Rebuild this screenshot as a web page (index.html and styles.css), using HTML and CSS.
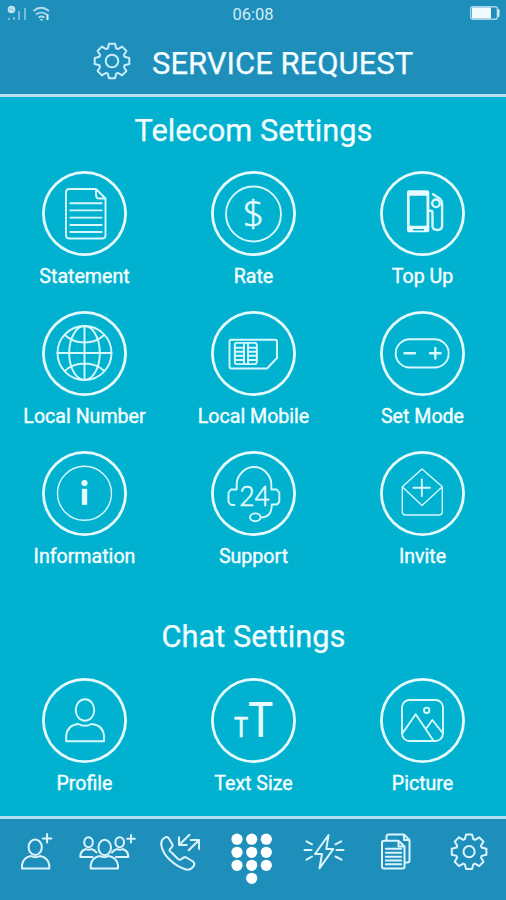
FILE: index.html
```html
<!DOCTYPE html>
<html lang="en">

<head>
    <meta charset="UTF-8">
    <title>Service Request</title>
    <meta name="viewport" content="width=device-width, initial-scale=1.0">
    <link rel="stylesheet" href="styles.css">
</head>

<body>
    <header>
        <div class="status-bar">
            <div class="status-left">
                <svg class="signal" width="22" height="18" viewBox="0 0 22 18">
                    <circle cx="6.500" cy="4.500" r="3.800" fill="#bfe0f0"/>
                    <path d="M4.500 3.500l4 2" stroke="#7fb9d5"/>
                    <path d="M4 13v2M9 12v3M14 6v9M20 3v12" stroke="#79bcd8" stroke-width="2"/>
                </svg>
                <svg width="20" height="18" viewBox="0 0 20 18">
                    <path d="M1.500 6q7.500-6.500 15.500 0M4 9.500q5-4 10.500 0M6.500 12.700q3-2.400 6 0" fill="none" stroke="#b5dcec" stroke-width="1.700"/>
                    <path d="M9.500 15.500v-1.500M15.500 9v6" stroke="#d9eef7" stroke-width="2"/>
                </svg>
            </div>
            <div class="time">06:08</div>
            <svg class="battery" width="30" height="14" viewBox="0 0 30 14">
                <rect x=".7" y=".7" width="26.600" height="12.600" rx="2" fill="none" stroke="#a9d3e6" stroke-width="1.400"/>
                <rect x="2" y="1.500" width="19" height="11" fill="#f0fbff"/>
                <path d="M28.500 4v6" stroke="#d3ebf5" stroke-width="2"/>
            </svg>
        </div>
        <div class="title-row">
            <svg width="40" height="40" viewBox="-20 -20 40 40" class="line-icon">
                <path d="M-4.200-12.600L-3-17.300H3L4.200-12.600L5.900-11.900L10.100-14.400L14.400-10.100L11.900-5.900L12.600-4.200L17.300-3V3L12.600 4.200L11.900 5.900L14.400 10.100L10.100 14.400L5.900 11.900L4.200 12.600L3 17.300H-3L-4.200 12.600L-5.900 11.900L-10.100 14.400L-14.400 10.100L-11.900 5.900L-12.600 4.200L-17.300 3V-3L-12.600-4.200L-11.900-5.900L-14.400-10.100L-10.100-14.400L-5.900-11.900Z"/>
                <circle r="6.300"/>
            </svg>
            <h1>SERVICE REQUEST</h1>
        </div>
    </header>

    <main>
        <h2>Telecom Settings</h2>
        <div class="grid">
            <div class="item">
                <svg class="icon" viewBox="0 0 85 85">
                    <path d="M54 18H27.500q-3.500 0-3.500 3.500V64q0 3.500 3.500 3.500H60q3.500 0 3.500-3.500V27.500ZM54 18v6q0 3.500 3.500 3.500h6"/>
                    <path d="M28.300 32.300h31.400M28.300 39.400h31.400M28.300 46.600h31.400M28.300 54h31.400M28.300 61h31.400"/>
                </svg>
                <span>Statement</span>
            </div>
            <div class="item">
                <svg class="icon" viewBox="0 0 85 85">
                    <circle cx="42.500" cy="43" r="27.500"/>
                    <text class="dollar" x="42.500" y="55.500">$</text>
                </svg>
                <span>Rate</span>
            </div>
            <div class="item">
                <svg class="icon" viewBox="0 0 85 85">
                    <path class="solid" fill-rule="evenodd" d="M29 19.300h18.300q2 0 2 2v38q0 2-2 2H29q-2 0-2-2v-38q0-2 2-2ZM29.700 24.700v30h16.800v-30ZM33 58h11v1.500H33Z"/>
                    <path class="thick" d="M49 39.700h1.500q2 0 2 2V54.500q0 4.500 4.800 4.500t4.800-4.500V32q0-2.500-2-4.200L53 23.300"/>
                    <circle class="thick" cx="56" cy="32.300" r="3.800"/>
                </svg>
                <span>Top Up</span>
            </div>
            <div class="item">
                <svg class="icon" viewBox="0 0 85 85">
                    <circle cx="42.500" cy="42" r="27"/>
                    <ellipse cx="42.500" cy="42" rx="15.300" ry="27"/>
                    <path d="M42.500 15v54M15.500 42h54M22.800 24q8 7.500 19.700 7.500T62.200 24M22.800 60q8-7.500 19.700-7.500T62.200 60"/>
                </svg>
                <span>Local Number</span>
            </div>
            <div class="item">
                <svg class="icon" viewBox="0 0 85 85">
                    <path d="M20.500 28.800h43.500q2 0 2 2V47L56 57.500H20.500q-2 0-2-2V30.800q0-2 2-2Z"/>
                    <rect x="23.800" y="31.900" width="22" height="21.200" rx="2"/>
                    <path d="M33 32v21M37 32v21M24 36.700h9M24 40.700h9M24 44.700h9M24 49h9M37 36.700h9M37 40.700h9M37 44.700h9M37 49h9"/>
                </svg>
                <span>Local Mobile</span>
            </div>
            <div class="item">
                <svg class="icon" viewBox="0 0 85 85">
                    <rect x="15.700" y="28.300" width="53" height="28.200" rx="14.100"/>
                    <path class="thick" d="M24.500 42.300h10.500M50 42.300h10.500M55.300 37v10.600"/>
                </svg>
                <span>Set Mode</span>
            </div>
            <div class="item">
                <svg class="icon" viewBox="0 0 85 85">
                    <circle class="thin" cx="42.500" cy="42.300" r="27"/>
                    <circle class="solid" cx="42.500" cy="32" r="3.100"/>
                    <rect class="solid" x="39.900" y="37.700" width="5.300" height="16.300" rx="1"/>
                </svg>
                <span>Information</span>
            </div>
            <div class="item">
                <svg class="icon" viewBox="0 0 85 85">
                    <path d="M23.500 54H20l-2.500-3V41.500L20 38.500h5.700V33q0-6 5-11.500 5-5.500 12.300-5.500t12.300 5.500q5 5.500 5 11.500v5.500h5.500l2.500 3V51l-2.500 2.500h-5q0 13-10.700 13"/>
                    <ellipse cx="44.300" cy="66.300" rx="5.300" ry="3.900"/>
                    <text class="hours" x="43.500" y="54.500">24</text>
                </svg>
                <span>Support</span>
            </div>
            <div class="item">
                <svg class="icon" viewBox="0 0 85 85">
                    <path class="thin" d="M42 18L22.300 35.700V60.500q0 3.500 3.500 3.500h33q3.500 0 3.500-3.500V35.700ZM22.300 35.700L42 54.500L62.300 35.700"/>
                    <path d="M33.500 36.700h16.500M41.800 28.500v16.500"/>
                </svg>
                <span>Invite</span>
            </div>
        </div>

        <h2 class="chat-title">Chat Settings</h2>
        <div class="grid">
            <div class="item">
                <svg class="icon" viewBox="0 0 85 85">
                    <ellipse cx="43" cy="32" rx="9.300" ry="10.700"/>
                    <path d="M24.200 63.300V58q1-11 12.300-12 6.500 3.500 13 0 11.500 1 12.500 12v5.300Z"/>
                </svg>
                <span>Profile</span>
            </div>
            <div class="item">
                <svg class="icon" viewBox="0 0 85 85">
                    <text class="small-t" x="23.300" y="59" textLength="13.700" lengthAdjust="spacingAndGlyphs">T</text>
                    <text class="big-t" x="37.500" y="59" textLength="24.300" lengthAdjust="spacingAndGlyphs">T</text>
                </svg>
                <span>Text Size</span>
            </div>
            <div class="item">
                <svg class="icon" viewBox="0 0 85 85">
                    <rect x="22" y="22" width="41" height="41" rx="7.500"/>
                    <circle cx="46.700" cy="32.300" r="2.700"/>
                    <path d="M22.500 55.300L35.700 36.300L53.700 63M46 50.700L52.300 42L62.700 55"/>
                </svg>
                <span>Picture</span>
            </div>
        </div>
    </main>

    <nav>
        <svg viewBox="0 0 60 54">
            <ellipse cx="29.200" cy="15.200" rx="6.600" ry="7.700"/>
            <path d="M16 36.500V33q1-7.500 9-9 4.500 2.500 9 0 8 1.500 9.300 9v3.500ZM36.800 6.400h8.600M41.100 2v8.600"/>
        </svg>
        <svg viewBox="0 0 60 54">
            <ellipse cx="26.700" cy="15.500" rx="6.300" ry="7.700"/>
            <path d="M12.700 36.500V33q1-7.500 9-9 4.500 2.500 9 0 8 1.500 9.300 9v3.500Z"/>
            <ellipse cx="10.500" cy="10.300" rx="4.300" ry="5"/>
            <ellipse cx="41.700" cy="10.300" rx="4.300" ry="5"/>
            <path d="M14.500 25H2.300q0-6.500 5.700-8 2.500 1.500 5 0 3.500.5 5.500 3.500M38 25h12.300q0-6.500-5.800-8-2.500 1.500-5 0-3.500.5-5.500 3.500M49.200 6.700h7.600M53 2.900v7.600"/>
        </svg>
        <svg viewBox="0 0 60 54">
            <path d="M12.500 7.500Q16 3.500 18.500 6L22.500 12.500Q23 14.500 20.500 16.500T21.500 20.500L28 27Q30 28.500 31.500 27T35.500 25L43 29.500Q46 32 42.500 35.500T34.500 37Q27 34.500 20 28T11.500 14Q10.500 10 12.500 7.500Z"/>
            <path d="M39.500 2.700L29 13M29 5.300V13h7.700M38.700 18.300L49 8M40.700 8H49v9"/>
        </svg>
        <svg viewBox="0 0 60 54">
            <g class="dots">
                <circle cx="15" cy="7.200" r="5.600"/><circle cx="29.700" cy="7.200" r="5.600"/><circle cx="44.300" cy="7.200" r="5.600"/>
                <circle cx="15" cy="20.300" r="5.600"/><circle cx="29.700" cy="20.300" r="5.600"/><circle cx="44.300" cy="20.300" r="5.600"/>
                <circle cx="15" cy="33.300" r="5.600"/><circle cx="29.700" cy="33.300" r="5.600"/><circle cx="44.300" cy="33.300" r="5.600"/>
                <circle cx="29.700" cy="46.300" r="5.600"/>
            </g>
        </svg>
        <svg viewBox="0 0 60 54">
            <path d="M34.500 3L21 22h7L25.500 36.300L39.300 17h-7ZM10.500 18h7M12.500 9.300l5.500 3M12.500 27.700l5.500-3.200M42.500 18h7M41.500 12.300L47.200 9.300M41.500 24.500L47.500 27.700"/>
        </svg>
        <svg viewBox="0 0 60 54">
            <path d="M32.500 8.700H18q-2 0-2 2V34.500q0 2 2 2h18.500q2 0 2-2V14.500ZM32.500 8.700v5.800h6"/>
            <path d="M20.500 8.500V4.500q0-2 2-2H38l5.500 5.500v20q0 2.500-2 2.500h-2.500M38 2.500V8h5.500"/>
            <path d="M19.800 16.700h15.400M19.800 20.700h15.400M19.800 24.700h15.400M19.800 28.500h15.400M19.800 32.300h15.400"/>
        </svg>
        <svg viewBox="0 0 60 54">
            <g transform="translate(31.100 19.700)">
                <path d="M-4.200-12.600L-3-17.300H3L4.200-12.600L5.900-11.900L10.100-14.400L14.400-10.100L11.900-5.900L12.600-4.200L17.300-3V3L12.600 4.200L11.900 5.900L14.400 10.100L10.100 14.400L5.900 11.900L4.200 12.600L3 17.300H-3L-4.200 12.600L-5.900 11.900L-10.100 14.400L-14.400 10.100L-11.900 5.900L-12.600 4.200L-17.300 3V-3L-12.600-4.200L-11.900-5.900L-14.400-10.100L-10.100-14.400L-5.900-11.900Z"/>
                <circle r="5.600"/>
            </g>
        </svg>
    </nav>
</body>

</html>
```
FILE: styles.css
```css
* {
    box-sizing: border-box;
}

body {
    margin: 0;
    width: 506px;
    height: 900px;
    overflow: hidden;
    display: flex;
    flex-direction: column;
    background-color: #00b2d0;
    color: #f4fdff;
    font-family: Roboto, "Liberation Sans", sans-serif;
}

svg {
    display: block;
    fill: none;
    stroke-linecap: round;
    stroke-linejoin: round;
}

header {
    height: 97px;
    background-color: #1e8fba;
    border-bottom: 3px solid #b5dff0;
}

.status-bar {
    height: 28px;
    padding: 0 6px 0 5px;
    display: grid;
    grid-template-columns: 1fr auto 1fr;
    align-items: center;
}

.status-left {
    display: flex;
    gap: 5px;
}

.status-left svg {
    stroke-linecap: butt;
}

.time {
    padding-left: 1px;
    font-size: 16.5px;
    color: #d5edf6;
}

.battery {
    justify-self: end;
    margin-top: -2px;
}

.title-row {
    display: flex;
    align-items: center;
    height: 66px;
    padding-left: 92px;
    gap: 20px;
}

.line-icon {
    stroke: #c8ecfa;
    stroke-width: 2;
}

h1,
h2 {
    margin: 0;
    font-weight: 400;
    white-space: nowrap;
    -webkit-text-stroke: 0.25px #f4fdff;
}

h1 {
    padding-top: 6px;
    font-size: 31px;
    line-height: 36px;
}

h2 {
    height: 74px;
    padding: 16px 0 0 1px;
    font-size: 30.8px;
    line-height: 36px;
    text-align: center;
}

.chat-title {
    margin-top: 27px;
    height: 60px;
    padding-top: 1px;
}

main {
    height: 719px;
}

.grid {
    display: grid;
    grid-template-columns: repeat(3, 169px);
    grid-auto-rows: 140px;
}

.item {
    display: flex;
    flex-direction: column;
    align-items: center;
    font-size: 19.6px;
    line-height: 24px;
    gap: 9px;
}

.item span {
    -webkit-text-stroke: 0.4px #f4fdff;
}

.icon {
    width: 85px;
    height: 85px;
    border-radius: 50%;
    box-shadow: inset 0 0 0 2.8px #e6fbff;
    stroke: #d8f8ff;
    stroke-width: 1.9;
}

.icon .thin {
    stroke-width: 1.4;
}

.icon .thick {
    stroke-width: 2.4;
}

.icon .solid {
    fill: #e6fbff;
    stroke: none;
}

.icon text {
    fill: #e6fbff;
    stroke: #e6fbff;
    stroke-width: 0.6;
    font-family: Lato, sans-serif;
}

.icon .dollar {
    font-family: "Open Sans", sans-serif;
    font-size: 37px;
    font-weight: 300;
    text-anchor: middle;
}

.icon .hours {
    font-size: 26.5px;
    font-weight: 300;
    text-anchor: middle;
}

.icon .small-t {
    font-size: 26px;
}

.icon .big-t {
    font-size: 48.5px;
    stroke-width: 0.2;
}

nav {
    flex: 1;
    display: grid;
    grid-template-columns: repeat(7, 72px);
    justify-items: center;
    padding-top: 13px;
    background-color: #1e8fba;
    border-top: 3px solid #b5dff0;
}

nav svg {
    width: 60px;
    height: 54px;
    stroke: #dcf4fd;
    stroke-width: 2;
}

.dots {
    fill: #ffffff;
    stroke: none;
}
```
